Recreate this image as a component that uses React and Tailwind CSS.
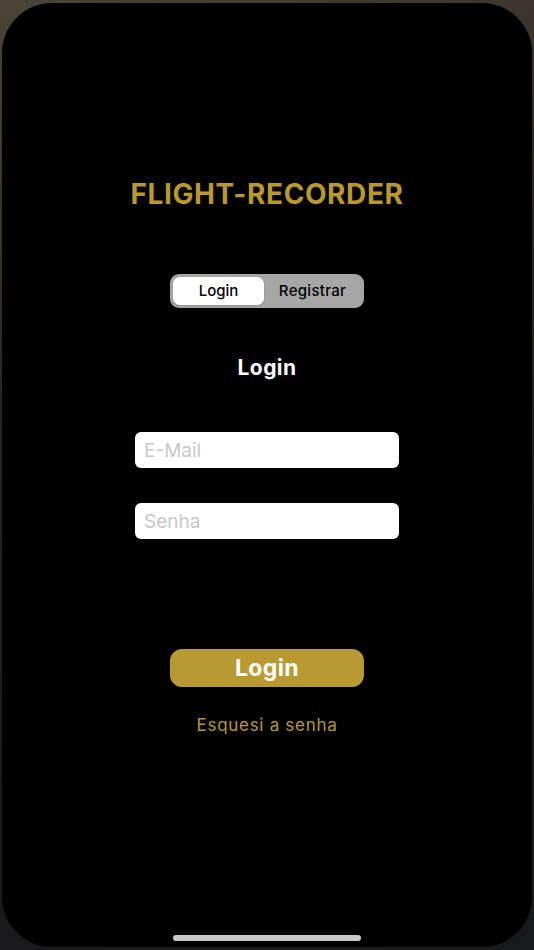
import { useState } from "react";

export default function App() {
  const [tab, setTab] = useState("login");
  const [email, setEmail] = useState("");
  const [senha, setSenha] = useState("");

  return (
    <div
      className="h-[950px] w-[534px] pt-[3px] px-[2px] pb-[3px] bg-[linear-gradient(160deg,#4b4439_0%,#2a2622_35%,#1b1b1d_70%,#18191b_100%)]"
      style={{ fontFamily: "Inter, 'Liberation Sans', sans-serif" }}
    >
      <div className="h-full rounded-[50px] bg-black flex flex-col items-center">
        <h1 className="mt-[175px] text-[28px] leading-[32px] font-bold tracking-[0.6px] text-[#b8992f]">
          FLIGHT-RECORDER
        </h1>

        {/* Segmented control */}
        <div className="mt-[64px] w-[194px] h-[34px] rounded-[9px] bg-[#a6a6a6] p-[3px] flex">
          <button
            onClick={() => setTab("login")}
            className={`w-[91px] rounded-[7px] text-[15px] font-medium text-black ${tab === "login" ? "bg-white shadow-sm" : ""}`}
          >
            Login
          </button>
          <button
            onClick={() => setTab("registrar")}
            className={`flex-1 rounded-[7px] text-[15px] font-medium text-black tracking-[0.3px] ${tab === "registrar" ? "bg-white shadow-sm" : ""}`}
          >
            Registrar
          </button>
        </div>

        <h2 className="mt-[46px] text-[21px] leading-[28px] font-bold tracking-[0.4px] text-white">Login</h2>

        <input
          value={email}
          onChange={(e) => setEmail(e.target.value)}
          placeholder="E-Mail"
          className="mt-[50px] w-[264px] h-[36px] rounded-[6px] bg-white px-[9px] text-[19px] text-black placeholder:text-[#c7c7cc] outline-none"
        />
        <input
          type="password"
          value={senha}
          onChange={(e) => setSenha(e.target.value)}
          placeholder="Senha"
          className="mt-[35px] w-[264px] h-[36px] rounded-[6px] bg-white px-[9px] text-[19px] text-black placeholder:text-[#c7c7cc] outline-none"
        />

        <button className="mt-[110px] w-[194px] h-[38px] rounded-[12px] bg-[#b99a32] text-white text-[23px] font-bold tracking-[0.4px]">
          Login
        </button>

        <button className="mt-[26px] text-[17px] leading-[24px] text-[#b8992f] tracking-[0.7px]">
          Esquesi a senha
        </button>

        <div className="mt-auto mb-[6px] w-[188px] h-[6px] rounded-full bg-[#c9c9c9]" />
      </div>
    </div>
  );
}
